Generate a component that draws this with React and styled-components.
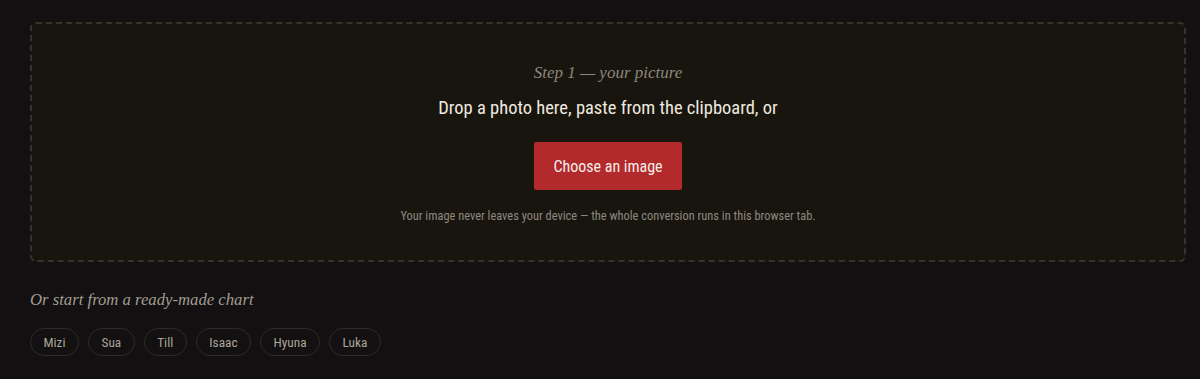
import React from "react"
import styled, { createGlobalStyle } from "styled-components"

const GlobalStyle = createGlobalStyle`
  body {
    margin: 0;
    background: #121010;
    font-family: Roboto, "Liberation Sans", Arial, sans-serif;
    font-stretch: 75%;
    font-weight: 380;
  }
`

const charts = ["Mizi", "Sua", "Till", "Isaac", "Hyuna", "Luka"]

const App = () => {
  return (
    <Page>
      <GlobalStyle />
      <DropZone>
        <Step>Step 1 — your picture</Step>
        <Title>Drop a photo here, paste from the clipboard, or</Title>
        <ChooseBtn type="button">Choose an image</ChooseBtn>
        <Note>
          Your image never leaves your device — the whole conversion runs in this browser tab.
        </Note>
      </DropZone>

      {/* ready-made charts */}
      <Samples>
        <SamplesTitle>Or start from a ready-made chart</SamplesTitle>
        <ChipRow>
          {charts.map((name) => (
            <Chip key={name} type="button">
              {name}
            </Chip>
          ))}
        </ChipRow>
      </Samples>
    </Page>
  )
}

export default App

const Page = styled.div`
  padding: 22px 14px 24px 30px;
  min-height: 379px;
  box-sizing: border-box;
`

const DropZone = styled.div`
  display: flex;
  flex-direction: column;
  align-items: center;
  height: 240px;
  box-sizing: border-box;
  padding-top: 38px;
  border: 2px dashed #35332b;
  border-radius: 6px;
  background: #18150f;
`

const Step = styled.div`
  font-family: "Liberation Serif", "Times New Roman", serif;
  font-style: italic;
  font-stretch: normal;
  font-weight: 400;
  font-size: 17px;
  line-height: 22px;
  color: #8d877b;
`

const Title = styled.div`
  margin-top: 11px;
  font-size: 18.5px;
  line-height: 26px;
  color: #efe9df;
`

const ChooseBtn = styled.button`
  margin-top: 21px;
  width: 148px;
  height: 48px;
  border: none;
  border-radius: 2px;
  background: #b22a2c;
  color: #f6ece6;
  font-family: Roboto, "Liberation Sans", Arial, sans-serif;
  font-stretch: 75%;
  font-weight: 380;
  font-size: 16px;
  cursor: pointer;
`

const Note = styled.div`
  margin-top: 17px;
  font-size: 12.4px;
  line-height: 18px;
  color: #8e887e;
`

const Samples = styled.div`
  margin-top: 26px;
`

const SamplesTitle = styled.div`
  font-family: "Liberation Serif", "Times New Roman", serif;
  font-style: italic;
  font-stretch: normal;
  font-weight: 400;
  font-size: 16.7px;
  line-height: 24px;
  color: #a29c91;
`

const ChipRow = styled.div`
  display: flex;
  gap: 9px;
  margin-top: 16px;
`

const Chip = styled.button`
  height: 28px;
  padding: 0 12.5px;
  border: 1px solid #2e2a25;
  border-radius: 14px;
  background: transparent;
  color: #aaa49a;
  font-family: Roboto, "Liberation Sans", Arial, sans-serif;
  font-stretch: 75%;
  font-weight: 380;
  font-size: 13.3px;
  cursor: pointer;
`
